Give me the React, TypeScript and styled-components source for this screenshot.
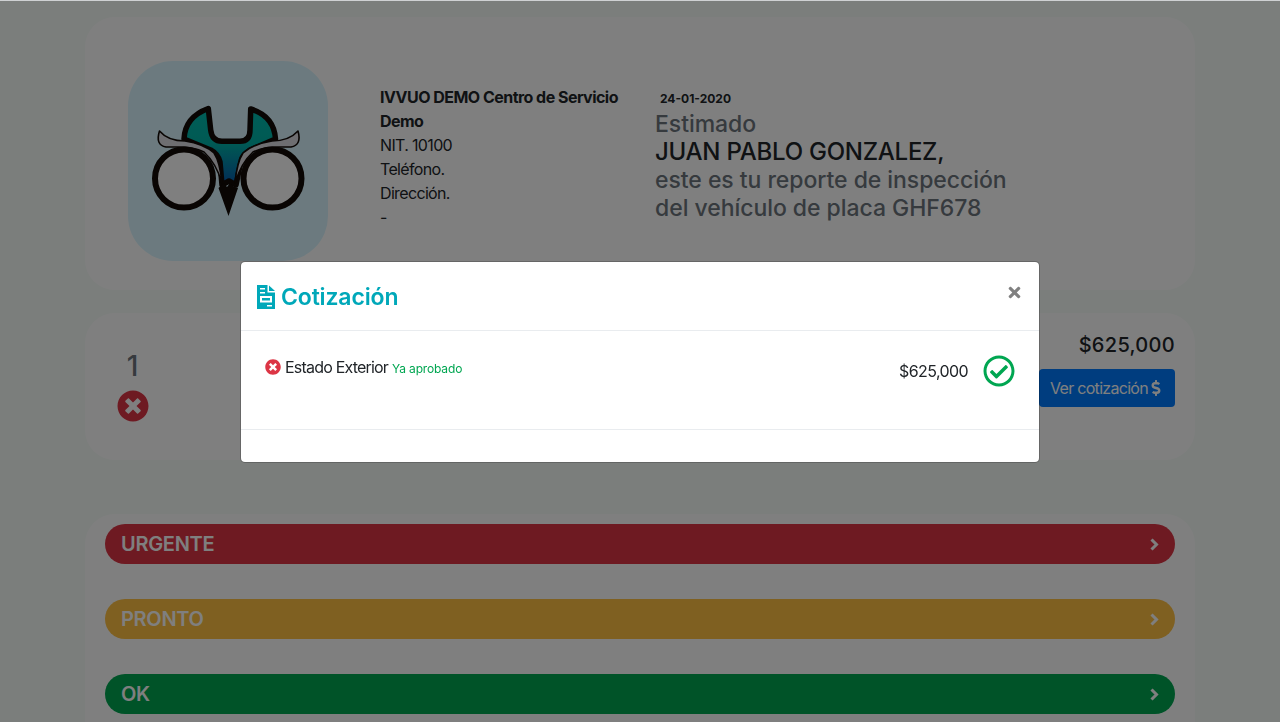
import React from "react";
import styled, { createGlobalStyle } from "styled-components";
import {
  FaDollarSign,
  FaRegCheckCircle,
  FaTimes,
  FaTimesCircle,
} from "react-icons/fa";

const Global = createGlobalStyle`
  html, body { margin: 0; padding: 0; height: 722px; overflow: hidden; background: #f7fcf9; }
  body { font-family: Inter, "Liberation Sans", sans-serif; color: #212529; }
  * { box-sizing: border-box; }
`;

const TopEdge = styled.div`
  height: 1px;
  background: #cfd1d3;
`;

const Page = styled.div`
  width: 1110px;
  margin: 0 auto;
  padding-top: 16px;
  display: flex;
  flex-direction: column;
`;

const Card = styled.section`
  background: #fff;
  border-radius: 30px;
`;

const HeaderCard = styled(Card)`
  height: 273px;
  padding: 44px 43px;
  display: flex;
  align-items: flex-start;
`;

const LogoTile = styled.div`
  width: 200px;
  height: 200px;
  flex: none;
  border-radius: 45px;
  background: #d9f5ff;
`;

const Company = styled.div`
  width: 275px;
  margin: 24px 0 0 52px;
  font-size: 16px;
  line-height: 24px;
  letter-spacing: -0.65px;
  color: #212529;
`;

const CompanyName = styled.div`
  font-weight: 700;
  letter-spacing: -0.53px;
`;

const Greeting = styled.div`
  margin: 30px 0 0 0;
  display: flex;
  flex-direction: column;
`;

const DateLabel = styled.div`
  margin-left: 5px;
  margin-bottom: 3px;
  font-size: 12px;
  font-weight: 700;
  line-height: 16px;
`;

const GreetLine = styled.div<{ $strong?: boolean }>`
  font-size: ${(p) => (p.$strong ? 24 : 23)}px;
  line-height: 28px;
  font-weight: 500;
  letter-spacing: ${(p) => (p.$strong ? -0.25 : -0.05)}px;
  color: ${(p) => (p.$strong ? "#212529" : "#6c757d")};
`;

const QuoteCard = styled(Card)`
  height: 147px;
  margin-top: 23px;
  padding: 0 20px;
  display: flex;
  justify-content: space-between;
`;

const CountColumn = styled.div`
  width: 56px;
  padding-top: 36px;
  display: flex;
  flex-direction: column;
  align-items: center;
`;

const Count = styled.div`
  font-size: 28px;
  font-weight: 500;
  line-height: 34px;
  color: #6c757d;
  margin-right: 1px;
`;

const CountIcon = styled(FaTimesCircle)`
  margin-top: 7px;
  font-size: 32px;
  color: #dc3545;
`;

const QuoteAside = styled.div`
  padding-top: 20px;
  display: flex;
  flex-direction: column;
  align-items: flex-end;
`;

const QuoteTotal = styled.div`
  font-size: 20px;
  font-weight: 500;
  line-height: 24px;
  letter-spacing: 0.3px;
`;

const QuoteButton = styled.button`
  margin-top: 12px;
  width: 136px;
  height: 38px;
  padding: 0;
  border: 0;
  border-radius: 4px;
  background: #007bff;
  color: #fff;
  font: 400 16px Inter, "Liberation Sans", sans-serif;
  letter-spacing: -0.7px;
  display: flex;
  align-items: center;
  justify-content: center;
  svg { font-size: 16px; }
`;

const StatusCard = styled(Card)`
  margin-top: 54px;
  padding: 10px 20px 40px;
  display: flex;
  flex-direction: column;
  gap: 35px;
`;

const StatusPill = styled.div<{ $color: string }>`
  height: 40px;
  padding: 0 16px 0 16px;
  border-radius: 20px;
  background: ${(p) => p.$color};
  color: #fff;
  font-size: 20px;
  font-weight: 600;
  letter-spacing: -0.3px;
  display: flex;
  align-items: center;
  justify-content: space-between;
`;

const PillChevron = styled.svg`
  width: 9px;
  height: 13px;
  fill: none;
  stroke: #fff;
  stroke-width: 3;
`;

const Backdrop = styled.div`
  position: fixed;
  inset: 1px 0 0;
  background: rgba(0, 0, 0, 0.5);
`;

const Modal = styled.div`
  position: fixed;
  left: 240px;
  top: 261px;
  width: 800px;
  height: 202px;
  background: #fff;
  border: 1px solid rgba(0, 0, 0, 0.2);
  border-radius: 5px;
  background-clip: padding-box;
  display: flex;
  flex-direction: column;
`;

const ModalHeader = styled.header`
  height: 69px;
  flex: none;
  padding: 0 16px;
  border-bottom: 1px solid #e9ecef;
  display: flex;
  align-items: flex-start;
  justify-content: space-between;
`;

const ModalTitle = styled.h5`
  margin: 21px 0 0;
  font-size: 23px;
  line-height: 28px;
  font-weight: 600;
  letter-spacing: -0.15px;
  color: #00a8b9;
  display: flex;
  align-items: center;
  gap: 6px;
`;

const TitleIcon = styled.svg`
  width: 18px;
  height: 24px;
  flex: none;
  fill: #00a8b9;
`;

const CloseButton = styled.button`
  margin-top: 22px;
  padding: 0;
  border: 0;
  background: none;
  color: #808080;
  font-size: 17px;
  line-height: 17px;
  display: flex;
`;

const ModalBody = styled.div`
  height: 98px;
  flex: none;
  padding: 24px 24px 0;
  display: flex;
  justify-content: space-between;
  align-items: flex-start;
`;

const ItemName = styled.div`
  margin-top: 1px;
  font-size: 16px;
  line-height: 22px;
  letter-spacing: -0.8px;
  display: flex;
  align-items: center;
  gap: 4px;
`;

const ItemIcon = styled(FaTimesCircle)`
  font-size: 16px;
  color: #dc3545;
`;

const ItemNote = styled.small`
  font-size: 12px;
  letter-spacing: -0.15px;
  color: #00a651;
  position: relative;
  top: 2px;
`;

const ItemAside = styled.div`
  display: flex;
  align-items: center;
  gap: 15px;
  font-size: 16px;
  letter-spacing: -0.6px;
`;

const ApprovedIcon = styled(FaRegCheckCircle)`
  font-size: 32px;
  color: #00a651;
`;

const ModalFooter = styled.footer`
  flex: 1;
  border-top: 1px solid #e9ecef;
`;

const Owl = () => (
  <svg width="200" height="200" viewBox="0 0 200 200">
    <defs>
      <linearGradient id="wrench" x1="0" y1="0" x2="0" y2="1">
        <stop offset="0" stopColor="#00bcae" />
        <stop offset="0.45" stopColor="#00b4a8" />
        <stop offset="1" stopColor="#0658ae" />
      </linearGradient>
    </defs>
    <path
      d="M80.3 47.5 L82.7 69 Q84 80.3 94 80.3 L112 80.3 Q122 80.3 122 69 L122.7 48 Q146 55 147.5 78 L122 89 Q114 94 113 100 L108 124 L101 120 L94 124 L92 101 Q90 93 82.7 89 L56 78 Q57 56 80.3 47.5 Z"
      fill="url(#wrench)"
      stroke="#120a06"
      strokeWidth="5.5"
      strokeLinejoin="round"
    />
    <path
      d="M31.5 70 Q40 80 57 80 Q76 83 86 92 Q92 101 94 122 Q88 102 76 91 Q66 86 50 86 L38 86 Q27 84 31.5 70 Z"
      fill="#dcdce2"
      stroke="#120a06"
      strokeWidth="1.6"
      strokeLinejoin="round"
    />
    <path
      d="M170 70 Q161 80 144 80 Q125 83 115 92 Q109 101 107 122 Q113 102 125 91 Q135 86 151 86 L163 86 Q174 84 170 70 Z"
      fill="#dcdce2"
      stroke="#120a06"
      strokeWidth="1.6"
      strokeLinejoin="round"
    />
    <circle cx="56" cy="117.5" r="29" fill="#fff" stroke="#120a06" strokeWidth="6" />
    <circle cx="144.5" cy="117.5" r="29" fill="#fff" stroke="#120a06" strokeWidth="6" />
    <path d="M90.5 127 L95.5 122 L99 126 L102 122 L105.5 125.5 L110 127 L100.5 155 Z" fill="#120a06" />
  </svg>
);

const DocIcon = () => (
  <TitleIcon viewBox="0 0 18 24">
    <path
      fillRule="evenodd"
      d="M0 0 H10.5 V7.5 H18 V24 H0 Z M3 3 V4.5 H8 V3 Z M3 7 V8.5 H8 V7 Z M3 11 V17.5 H15 V11 Z M5 13 H13 V15.5 H5 Z M10 20 V21.5 H15 V20 Z"
    />
    <path d="M12 0.5 L18 6 H12 Z" />
  </TitleIcon>
);

const Chevron = () => (
  <PillChevron viewBox="0 0 9 13">
    <polyline points="1.5,1.5 6.5,6.5 1.5,11.5" />
  </PillChevron>
);

export default function App() {
  return (
    <>
      <Global />
      <TopEdge />
      <Page>
        <HeaderCard>
          <LogoTile>
            <Owl />
          </LogoTile>
          <Company>
            <CompanyName>IVVUO DEMO Centro de Servicio Demo</CompanyName>
            <div>NIT. 10100</div>
            <div>Teléfono.</div>
            <div>Dirección.</div>
            <div>-</div>
          </Company>
          <Greeting>
            <DateLabel>24-01-2020</DateLabel>
            <GreetLine>Estimado</GreetLine>
            <GreetLine $strong>JUAN PABLO GONZALEZ,</GreetLine>
            <GreetLine>este es tu reporte de inspección</GreetLine>
            <GreetLine>del vehículo de placa GHF678</GreetLine>
          </Greeting>
        </HeaderCard>
        <QuoteCard>
          <CountColumn>
            <Count>1</Count>
            <CountIcon />
          </CountColumn>
          <QuoteAside>
            <QuoteTotal>$625,000</QuoteTotal>
            <QuoteButton>
              Ver cotización <FaDollarSign />
            </QuoteButton>
          </QuoteAside>
        </QuoteCard>
        <StatusCard>
          <StatusPill $color="#dc3545">
            URGENTE
            <Chevron />
          </StatusPill>
          <StatusPill $color="#ffc043">
            PRONTO
            <Chevron />
          </StatusPill>
          <StatusPill $color="#00a651">
            OK
            <Chevron />
          </StatusPill>
        </StatusCard>
      </Page>
      <Backdrop />
      <Modal>
        <ModalHeader>
          <ModalTitle>
            <DocIcon />
            Cotización
          </ModalTitle>
          <CloseButton>
            <FaTimes />
          </CloseButton>
        </ModalHeader>
        <ModalBody>
          <ItemName>
            <ItemIcon />
            Estado Exterior
            <ItemNote>Ya aprobado</ItemNote>
          </ItemName>
          <ItemAside>
            $625,000
            <ApprovedIcon />
          </ItemAside>
        </ModalBody>
        <ModalFooter />
      </Modal>
    </>
  );
}
